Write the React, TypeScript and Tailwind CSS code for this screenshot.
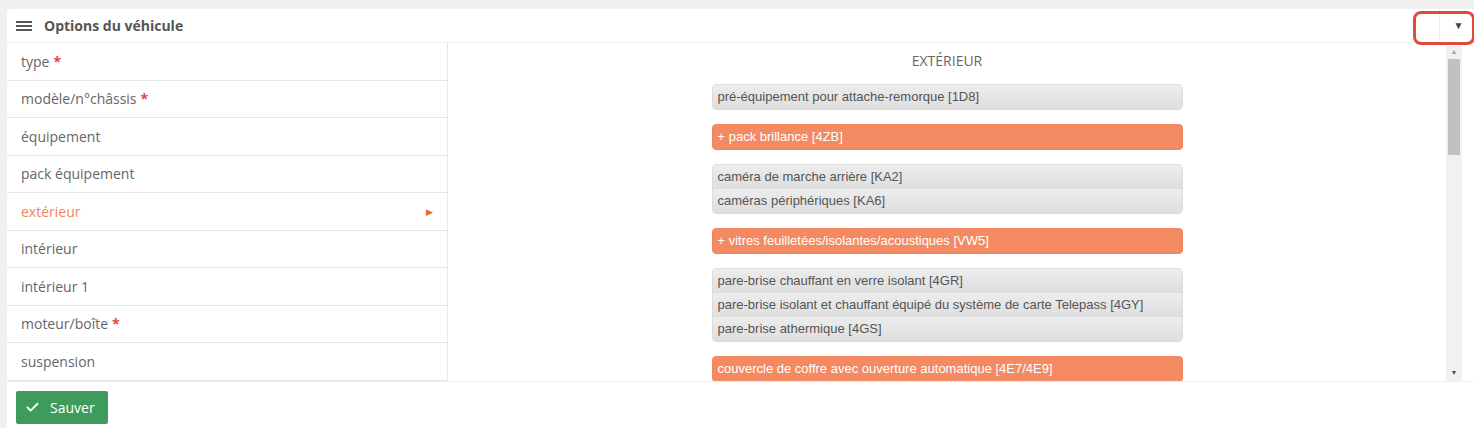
import { Check } from 'lucide-react';

const menuItems = [
  { label: 'type', required: true },
  { label: 'modèle/n°châssis', required: true },
  { label: 'équipement' },
  { label: 'pack équipement' },
  { label: 'extérieur', active: true },
  { label: 'intérieur' },
  { label: 'intérieur 1' },
  { label: 'moteur/boîte', required: true },
  { label: 'suspension' },
];

type Group = { selected?: boolean; items: string[] };

const groups: Group[] = [
  { items: ['pré-équipement pour attache-remorque [1D8]'] },
  { selected: true, items: ['+ pack brillance [4ZB]'] },
  { items: ['caméra de marche arrière [KA2]', 'caméras périphériques [KA6]'] },
  { selected: true, items: ['+ vitres feuilletées/isolantes/acoustiques [VW5]'] },
  {
    items: [
      'pare-brise chauffant en verre isolant [4GR]',
      'pare-brise isolant et chauffant équipé du système de carte Telepass [4GY]',
      'pare-brise athermique [4GS]',
    ],
  },
  { selected: true, items: ['couvercle de coffre avec ouverture automatique [4E7/4E9]'] },
];

const OptionGroup = ({ group }: { group: Group }) => (
  <div
    className={
      group.selected
        ? 'mb-[14px] rounded-[4px] border border-[#f0855c] bg-[#f48a62]'
        : 'mb-[14px] rounded-[4px] border border-[#dcdcdc] overflow-hidden'
    }
  >
    {group.items.map((item) => (
      <div
        key={item}
        className={
          group.selected
            ? 'h-[24px] pl-[5px] flex items-center text-[13px] text-white'
            : 'h-[24px] pl-[5px] flex items-center text-[13px] text-[#555] bg-gradient-to-b from-[#ededed] to-[#dedede]'
        }
      >
        {item}
      </div>
    ))}
  </div>
);

export default function App() {
  return (
    <div className="min-h-screen bg-[#f0f0f0] pt-[9px] pl-[7px] font-['Open_Sans',sans-serif]">
      <div className="relative bg-white rounded-tl-[4px] h-[419px] flex flex-col">
        {/* header */}
        <div className="h-[34px] border-b border-[#eeeeee] flex items-center pl-[9px] pr-0">
          <svg width="16" height="12" viewBox="0 0 16 12" className="text-[#555]">
            <rect x="0" y="1" width="16" height="2" fill="currentColor" />
            <rect x="0" y="5" width="16" height="2" fill="currentColor" />
            <rect x="0" y="9" width="16" height="2" fill="currentColor" />
          </svg>
          <span className="ml-[12px] text-[14px] font-bold text-[#555]">Options du véhicule</span>
          <div className="ml-auto h-full flex items-center">
            <div className="w-px h-full bg-[#eeeeee]" />
            <div className="w-[34px] flex justify-center text-[10px] text-[#444] pl-[3px]">▼</div>
          </div>
        </div>

        {/* annotation */}
        <div className="absolute left-[1406px] top-[2px] w-[62px] h-[34px] rounded-[8px] border-[3px] border-[#e14b3b]" />

        {/* body */}
        <div className="flex h-[338px]">
          <div className="w-[441px] border-r border-[#e8e8e8]">
            {menuItems.map((m) => (
              <div
                key={m.label}
                className="h-[37.5px] border-b border-[#e6e6e6] flex items-center pl-[14px] pr-[14px] text-[14px]"
              >
                <span className={m.active ? 'text-[#f2845c]' : 'text-[#666]'}>{m.label}</span>
                {m.required && <span className="ml-[4px] text-[#e0474c] font-bold">*</span>}
                {m.active && <span className="ml-auto text-[9px] text-[#e36b2d]">▶</span>}
              </div>
            ))}
          </div>

          <div className="flex-1 flex">
            <div className="flex-1 overflow-hidden pt-[8px]">
              <div className="text-center text-[14px] leading-[20px] text-[#666] mb-[13px]">EXTÉRIEUR</div>
              <div className="w-[471px] mx-auto font-['Liberation_Sans',Arial,sans-serif]">
                {groups.map((g, i) => (
                  <OptionGroup key={i} group={g} />
                ))}
              </div>
            </div>

            {/* scrollbar */}
            <div className="w-[16px] mt-[3px] mr-[12px] bg-[#f1f1f1] flex flex-col items-center">
              <div className="h-[13px] flex items-center text-[7px] text-[#a3a3a3]">▲</div>
              <div className="w-[12px] h-[96px] bg-[#c1c1c1]" />
              <div className="mt-auto h-[16px] flex items-center text-[7px] text-[#505050]">▼</div>
            </div>
          </div>
        </div>

        {/* footer */}
        <div className="flex-1 border-t border-[#eeeeee] pt-[9px] pl-[9px]">
          <button className="h-[33px] w-[92px] rounded-[2px] bg-[#3d9c5b] text-white text-[14px] flex items-center pl-[9px] gap-[10px]">
            <Check size={15} strokeWidth={3} />
            <span>Sauver</span>
          </button>
        </div>
      </div>
    </div>
  );
}
